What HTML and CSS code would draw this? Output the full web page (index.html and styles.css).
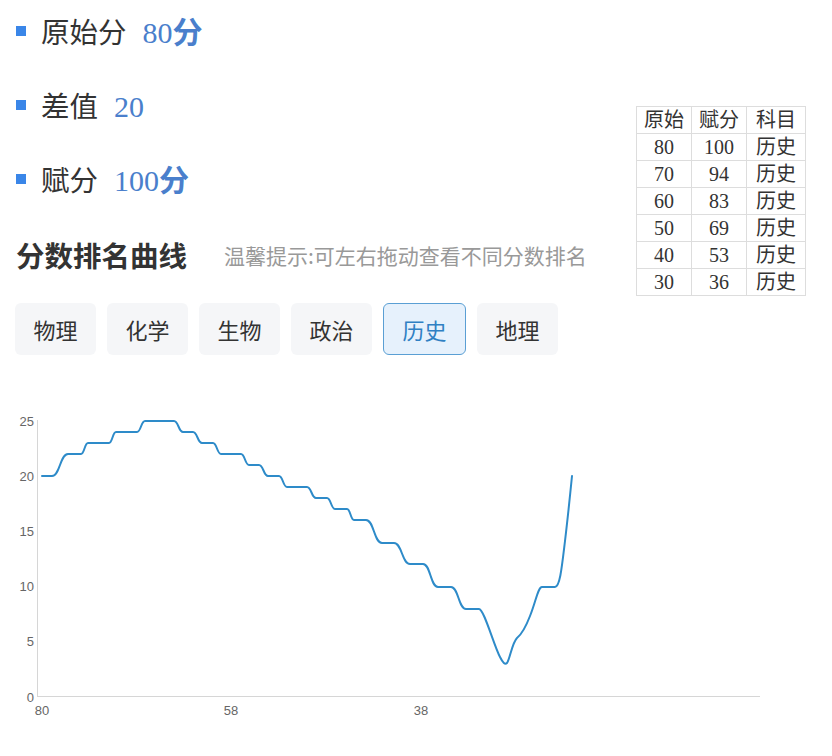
FILE: index.html
```html
<!DOCTYPE html>
<html lang="zh-CN">
<head>
<meta charset="utf-8">
<title>分数排名曲线</title>
<link rel="stylesheet" href="styles.css">
</head>
<body>
<div class="top">
  <div class="left">
    <ul class="stats">
      <li><span class="dot"></span><span class="label">原始分</span><span class="val"><span class="num">80</span><b>分</b></span></li>
      <li><span class="dot"></span><span class="label">差值</span><span class="val"><span class="num">20</span></span></li>
      <li><span class="dot"></span><span class="label">赋分</span><span class="val"><span class="num">100</span><b>分</b></span></li>
    </ul>
    <div class="heading">
      <h2 class="title">分数排名曲线</h2>
      <span class="hint">温馨提示:可左右拖动查看不同分数排名</span>
    </div>
  </div>
  <table class="score-table">
    <tr><td class="c1">原始</td><td class="c2">赋分</td><td class="c3">科目</td></tr>
    <tr><td>80</td><td>100</td><td>历史</td></tr>
    <tr><td>70</td><td>94</td><td>历史</td></tr>
    <tr><td>60</td><td>83</td><td>历史</td></tr>
    <tr><td>50</td><td>69</td><td>历史</td></tr>
    <tr><td>40</td><td>53</td><td>历史</td></tr>
    <tr><td>30</td><td>36</td><td>历史</td></tr>
  </table>
</div>
<div class="tabs">
  <span class="tab">物理</span>
  <span class="tab">化学</span>
  <span class="tab">生物</span>
  <span class="tab">政治</span>
  <span class="tab active">历史</span>
  <span class="tab">地理</span>
</div>
<svg class="chart" width="832" height="376" viewBox="0 0 832 376" xmlns="http://www.w3.org/2000/svg">
  <g transform="translate(0,-380)">
    <line class="axis" x1="37.5" y1="419" x2="37.5" y2="696"/>
    <line class="axis" x1="37.5" y1="695.5" x2="760" y2="695.5"/>
    <g class="ylab">
      <text x="34" y="424.5">25</text>
      <text x="34" y="479.5">20</text>
      <text x="34" y="534.5">15</text>
      <text x="34" y="589.5">10</text>
      <text x="34" y="644.5">5</text>
      <text x="34" y="700.5">0</text>
    </g>
    <g class="xlab">
      <text x="42" y="714">80</text>
      <text x="231" y="714">58</text>
      <text x="421" y="714">38</text>
    </g>
    <path class="line" d="M42,475 L52,475 C60,475 60,453 68,453 L81,453 C84.5,453 84.5,442 88,442 L109,442 C112.5,442 112.5,431 116,431 L137,431 C141,431 141,420 145,420 L174,420 C178.5,420 178.5,431 183,431 L193,431 C197.5,431 197.5,442 202,442 L213,442 C217,442 217,453 221,453 L241,453 C245,453 245,464 249,464 L259,464 C263.5,464 263.5,475 268,475 L279,475 C283,475 283,486 287,486 L307,486 C311.5,486 311.5,497 316,497 L327,497 C331,497 331,508 335,508 L347,508 C350.5,508 350.5,519 354,519 L366,519 C374,519 374,542 382,542 L394,542 C402,542 402,563 410,563 L423,563 C430.5,563 430.5,586 438,586 L451,586 C458.5,586 458.5,608 466,608 L479,608 C484,608 494,645 500,656 C503,662 505,664 507,662 C510,658 512,642 517,637 C522,633 525,628 530,615 C536,600 538,586 542,586 L555,586 C560,586 562,565 565,540 C568,515 570,495 572,475"/>
  </g>
</svg>
</body>
</html>
```
FILE: styles.css
```css
html, body {
  margin: 0;
  padding: 0;
  background: #ffffff;
}
body {
  width: 832px;
  height: 756px;
  overflow: hidden;
  font-family: "Noto Sans CJK SC", "Noto Sans", sans-serif;
  color: #333333;
}
.top {
  display: flex;
  align-items: flex-start;
}
.left {
  flex: 1;
}
.stats {
  list-style: none;
  margin: 0;
  padding: 11px 0 0 16px;
}
.stats li {
  display: flex;
  align-items: center;
  height: 40px;
  margin-bottom: 34px;
}
.stats li:last-child {
  margin-bottom: 36px;
}
.dot {
  width: 10px;
  height: 10px;
  background: #3a86e8;
  margin-right: 15px;
}
.label {
  font-size: 28.5px;
  line-height: 40px;
  color: #333333;
}
.val {
  margin-left: 16px;
  font-size: 30px;
  line-height: 40px;
  color: #4a7fcc;
}
.num {
  font-family: "Liberation Serif", serif;
}
.val b {
  font-weight: 700;
}
.heading {
  display: flex;
  align-items: center;
  padding-left: 16px;
  height: 40px;
}
.title {
  margin: 0;
  font-size: 28.5px;
  line-height: 40px;
  font-weight: 700;
  color: #333333;
}
.hint {
  margin-left: 37px;
  font-size: 21px;
  line-height: 40px;
  color: #999999;
}
.score-table {
  margin-top: 106px;
  margin-right: 26px;
  border-collapse: collapse;
  font-family: "Liberation Serif", "Noto Sans CJK SC", serif;
  font-size: 20px;
  color: #333333;
}
.score-table td {
  border: 1px solid #dddddd;
  height: 26px;
  padding: 0;
  text-align: center;
  line-height: 26px;
}
.score-table .c1 { width: 54px; }
.score-table .c2 { width: 54px; }
.score-table .c3 { width: 58px; }
.tabs {
  display: flex;
  gap: 11px;
  padding-left: 15px;
  margin-top: 7px;
}
.tab {
  box-sizing: border-box;
  width: 81px;
  height: 52px;
  line-height: 52px;
  text-align: center;
  font-size: 22px;
  background: #f5f6f8;
  border-radius: 6px;
  color: #333333;
}
.tab.active {
  width: 83px;
  background: #e6f1fc;
  border: 1px solid #5a9fd4;
  line-height: 50px;
  color: #2f80c3;
}
.chart {
  display: block;
  margin-top: 26px;
}
.axis {
  stroke: #d6d6d6;
  stroke-width: 1;
}
.ylab text {
  font-family: "Liberation Sans", Arial, sans-serif;
  font-size: 13px;
  fill: #666666;
  text-anchor: end;
}
.xlab text {
  font-family: "Liberation Sans", Arial, sans-serif;
  font-size: 13px;
  fill: #666666;
  text-anchor: middle;
}
.line {
  fill: none;
  stroke: #2e8bc9;
  stroke-width: 2;
  stroke-linejoin: round;
  stroke-linecap: round;
}
```
